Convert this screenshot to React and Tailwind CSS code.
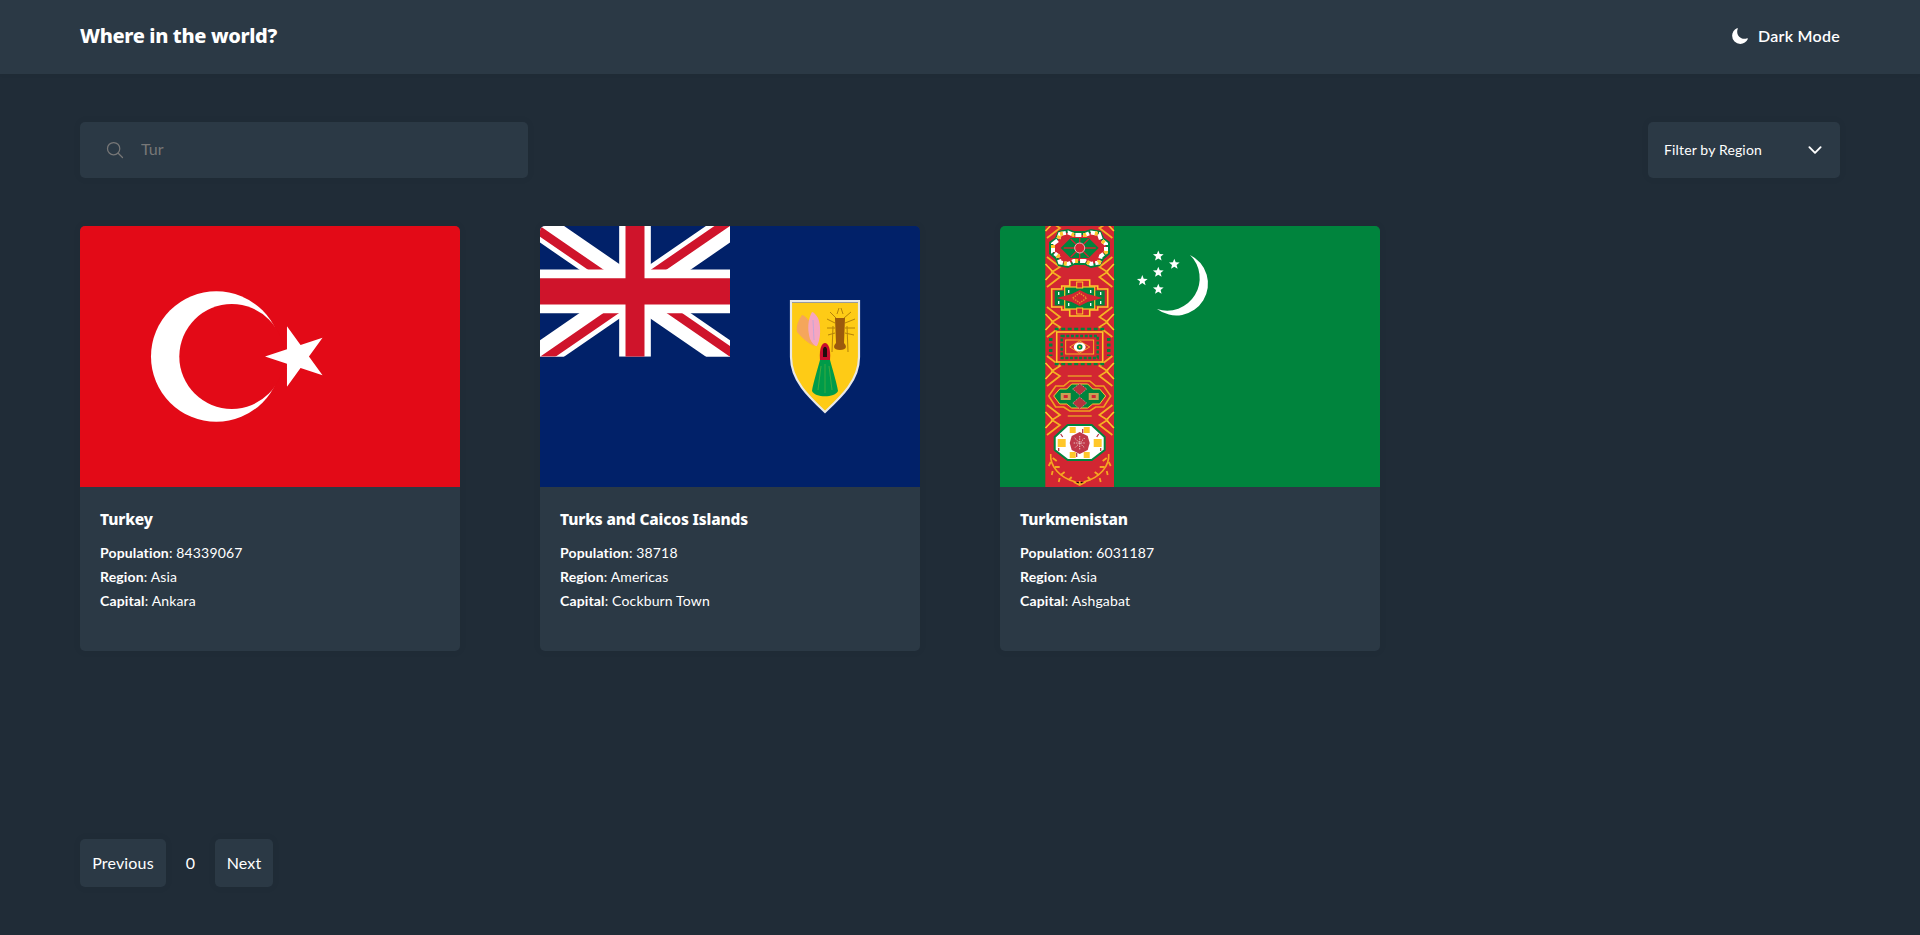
import React from "react";
import { IoMoon, IoSearchOutline, IoChevronDown } from "react-icons/io5";

const starPts = (cx, cy, R, rot = -90, r = R * 0.382) => {
  const p = [];
  for (let i = 0; i < 10; i++) {
    const a = ((rot + i * 36) * Math.PI) / 180;
    const d = i % 2 ? r : R;
    p.push(`${(cx + d * Math.cos(a)).toFixed(2)},${(cy + d * Math.sin(a)).toFixed(2)}`);
  }
  return p.join(" ");
};

function Soft({ id }) {
  return (
    <filter id={id} x="-5%" y="-5%" width="110%" height="110%">
      <feGaussianBlur stdDeviation="0.45" />
    </filter>
  );
}

function TurkeyFlag() {
  return (
    <svg viewBox="0 0 380 261" className="block w-full h-full">
      <rect width="380" height="261" fill="#e30a17" />
      <circle cx="136.3" cy="130.5" r="65.3" fill="#fff" />
      <circle cx="151.8" cy="130.5" r="52.5" fill="#e30a17" />
      <polygon points={starPts(216.8, 130.5, 31.8, 180)} fill="#fff" />
    </svg>
  );
}

function TurksFlag() {
  return (
    <svg viewBox="0 0 380 261" className="block w-full h-full">
      <defs><Soft id="softtc" /></defs>
      <rect width="380" height="261" fill="#012169" />
      <svg x="0" y="0" width="190" height="130.7" viewBox="0 0 60 30" preserveAspectRatio="none">
        <clipPath id="ujclip">
          <path d="M30,15 h30 v15 z v15 h-30 z h-30 v-15 z v-15 h30 z" />
        </clipPath>
        <path d="M0,0 L60,30 M60,0 L0,30" stroke="#fff" strokeWidth="6.8" />
        <path d="M0,0 L60,30 M60,0 L0,30" clipPath="url(#ujclip)" stroke="#cf142b" strokeWidth="4.4" />
        <path d="M30,0 v30 M0,15 h60" stroke="#fff" strokeWidth="10" />
        <path d="M30,0 v30 M0,15 h60" stroke="#cf142b" strokeWidth="6" />
      </svg>
      <g filter="url(#softtc)">
        <path d="M251,75 H319 V131 C319,155 300,172 285,186 C270,172 251,155 251,131 Z" fill="#fecb12" stroke="#e8e8e8" strokeWidth="2.2" />
        <path d="M252,76.5 H318" stroke="#9a9a9a" strokeWidth="1.2" />
        {/* conch */}
        <path d="M262,89 C258,95 256,100 257,106 C262,112 268,117 274,120 L272,98 C268,94 266,90 262,89 Z" fill="#f5a65b" />
        <path d="M272,86 C268,93 267,103 270,113 C272,117 275,121 277,120 C281,113 281,98 278,92 C276,89 274,86 272,86 Z" fill="#f6a6c1" />
        <path d="M273,94 L274,114" stroke="#b9a6dc" strokeWidth="0.8" />
        {/* lobster */}
        <g stroke="#b5820f" strokeWidth="1" fill="none">
          <path d="M296,92 L290,86 M304,92 L311,86 M297,88 L299,82 M303,88 L301,82 M295,97 L287,93 M305,97 L315,93 M295,102 L287,102 M305,102 L315,102 M295,107 L288,109 M305,107 L314,109 M293,100 L292,126 M307,100 L308,126" />
        </g>
        <path d="M295,92 H305 L304,117 C307,120 307,124 300,124 C293,124 293,120 296,117 Z" fill="#9c5a10" />
        {/* hood + green */}
        <path d="M280,134 C279,122 282,117 285,117 C288,117 291,122 290,134 Z" fill="#c8102e" />
        <path d="M283,131 V123 C284,120 286,120 287,123 V131 Z" fill="#200a10" />
        <path d="M280,134 H290 C293,145 297,158 298,165 C295,172 275,172 272,165 C273,158 277,145 280,134 Z" fill="#009b48" />
        <path d="M281,140 L278,164 M285,138 V167 M289,140 L292,164" stroke="#7dbb3a" strokeWidth="0.5" />
      </g>
    </svg>
  );
}

const G = "#00843d";
const R = "#d22630";
const Y = "#ffc72c";
const W = "#ffffff";

function Knot({ y, side }) {
  const t = side < 0 ? "" : `translate(159.4 0) scale(-1 1)`;
  return (
    <g transform={t}>
      <path d={`M45.5,${y - 8} L53,${y} L45.5,${y + 8}`} fill="none" stroke={Y} strokeWidth="1.6" />
      <path d={`M47,${y - 15} L60,${y - 5} L52,${y} L60,${y + 5} L47,${y + 15}`} fill="none" stroke="#f5b324" strokeWidth="1.7" />
    </g>
  );
}

function Carpet() {
  const cx = 79.7;
  return (
    <g filter="url(#softtm)">
      <rect x="45.3" y="-2" width="68.7" height="265" fill={R} />
      <Knot y={-3} side={-1} />
      <Knot y={-3} side={1} />
      {[46, 96, 145, 194].map((y) => (
        <React.Fragment key={y}>
          <Knot y={y} side={-1} />
          <Knot y={y} side={1} />
        </React.Fragment>
      ))}
      {/* gul 1 */}
      <path d="M58,5 L68,3 L74,5 L85,5 L91,3 L101,5 L104,12 L110,16 L110,28 L104,33 L100,40 L91,42 L85,39 L74,39 L68,42 L58,40 L55,33 L49,28 L49,16 L55,12 Z" fill={G} />
      <path d="M60,8 L68,6.5 L74,9 L85,9 L91,6.5 L99,8 L101,14 L106,18 L106,26 L101,30 L99,36.5 L91,38 L85,35 L74,35 L68,38 L60,36.5 L58,30 L53,26 L53,18 L58,14 Z" fill={R} stroke={W} strokeWidth="4" strokeDasharray="6 2" />
      <path d="M60,8 L68,6.5 L74,9 L85,9 L91,6.5 L99,8 L101,14 L106,18 L106,26 L101,30 L99,36.5 L91,38 L85,35 L74,35 L68,38 L60,36.5 L58,30 L53,26 L53,18 L58,14 Z" fill="none" stroke={Y} strokeWidth="4" strokeDasharray="3 9" />
      <path d={`M${cx - 19},22 L${cx - 9},12 L${cx + 9},12 L${cx + 19},22 L${cx + 9},32 L${cx - 9},32 Z`} fill={G} />
      <path d={`M${cx - 16},22 H${cx + 16} M${cx},11 V33 M${cx - 9},13 L${cx + 9},31 M${cx + 9},13 L${cx - 9},31`} stroke={R} strokeWidth="1.3" />
      <circle cx={cx} cy="22" r="5" fill={R} stroke="#e9b8bc" strokeWidth="1" />
      {/* gul 2 */}
      <path d={`M${cx - 28},63 H${cx - 18} V60 H${cx - 10} V54 H${cx + 10} V60 H${cx + 18} V63 H${cx + 28} V81 H${cx + 18} V84 H${cx + 10} V90 H${cx - 10} V84 H${cx - 18} V81 H${cx - 28} Z`} fill={R} stroke={Y} strokeWidth="1.6" />
      <rect x={cx - 25} y="64.5" width="50" height="15" fill={G} />
      <rect x={cx - 15} y="61" width="30" height="22" fill={G} stroke={Y} strokeWidth="1.2" />
      <path d={`M${cx - 23},72 L${cx - 8},68 L${cx},64 L${cx + 8},68 L${cx + 23},72 L${cx + 8},76 L${cx},80 L${cx - 8},76 Z`} fill={R} />
      <path d={`M${cx - 7},72 L${cx},67 L${cx + 7},72 L${cx},77 Z`} fill="none" stroke="#e8962a" strokeWidth="1.3" strokeDasharray="1.5 1" />
      <rect x={cx - 3} y="56" width="6" height="6" fill={R} stroke={Y} strokeWidth="1" />
      <rect x={cx - 3} y="82" width="6" height="6" fill={R} stroke={Y} strokeWidth="1" />
      <path d={`M${cx - 21},66 v3 M${cx + 21},66 v3 M${cx - 21},75 v3 M${cx + 21},75 v3 M${cx - 11},64 v3 M${cx + 11},64 v3 M${cx - 11},77 v3 M${cx + 11},77 v3`} stroke={W} strokeWidth="1.3" />
      {/* gul 3 */}
      <path d={`M${cx - 25},103 H${cx + 25} M${cx - 25},138 H${cx + 25}`} stroke={G} strokeWidth="2.4" strokeDasharray="4 2.5" />
      <path d={`M${cx - 29},112 V130 M${cx + 29},112 V130`} stroke={G} strokeWidth="3.5" strokeDasharray="3 2.5" />
      <rect x={cx - 23} y="106" width="46" height="30" fill={R} stroke={Y} strokeWidth="1.6" />
      <rect x={cx - 18} y="110" width="36" height="22" fill="none" stroke={G} strokeWidth="2.4" strokeDasharray="3 1.6" />
      <rect x={cx - 14} y="114" width="28" height="14" fill={R} stroke={Y} strokeWidth="0.9" />
      <path d={`M${cx - 10},121 L${cx},115 L${cx + 10},121 L${cx},127 Z`} fill={R} stroke={Y} strokeWidth="0.8" />
      <ellipse cx={cx} cy="121" rx="6" ry="4.5" fill={W} />
      <circle cx={cx} cy="121" r="2.8" fill={G} />
      <circle cx={cx} cy="121" r="1.1" fill={Y} />
      {/* gul 4 */}
      <path d={`M${cx - 31},170 L${cx - 24},160 H${cx - 16} L${cx - 10},155 H${cx + 10} L${cx + 16},160 H${cx + 24} L${cx + 31},170 L${cx + 24},181 H${cx + 16} L${cx + 10},185 H${cx - 10} L${cx - 16},181 H${cx - 24} Z`} fill={R} stroke="#f0a020" strokeWidth="1.6" />
      <path d={`M${cx - 26},170 L${cx - 20},163 H${cx - 13} L${cx - 8},158 H${cx + 8} L${cx + 13},163 H${cx + 20} L${cx + 26},170 L${cx + 20},178 H${cx + 13} L${cx + 8},182 H${cx - 8} L${cx - 13},178 H${cx - 20} Z`} fill={G} stroke={Y} strokeWidth="1" />
      <path d={`M${cx - 7},163 L${cx},157.5 L${cx + 7},163 L${cx},169 Z M${cx - 7},177 L${cx},171 L${cx + 7},177 L${cx},183 Z`} fill="#b5303e" stroke="#e9c6c8" strokeWidth="0.6" strokeDasharray="1.2 1" />
      <rect x={cx - 19} y="167" width="10" height="7" fill="#c9a052" />
      <rect x={cx + 9} y="167" width="10" height="7" fill="#c9a052" />
      <rect x={cx - 16} y="169" width="4" height="3" fill={R} />
      <rect x={cx + 12} y="169" width="4" height="3" fill={R} />
      <path d={`M${cx - 12},150 H${cx + 12} M${cx - 12},190 H${cx + 12}`} stroke="#e8962a" strokeWidth="1.3" />
      {/* gul 5 */}
      <path d={`M${cx - 12},199 H${cx + 12} L${cx + 25},211 V224 L${cx + 12},234 H${cx - 12} L${cx - 25},224 V211 Z`} fill={W} stroke={G} strokeWidth="2" />
      <path d={`M${cx - 22},213 h8 v8 h-8 Z M${cx + 14},213 h8 v8 h-8 Z M${cx - 10},201 h6 v6 h-6 Z M${cx + 4},201 h6 v6 h-6 Z M${cx - 10},226 h6 v6 h-6 Z M${cx + 4},226 h6 v6 h-6 Z`} fill={Y} />
      <path d={`M${cx - 21},222 v3 M${cx + 21},222 v3 M${cx - 19},208 l2,3 M${cx + 19},208 l-2,3 M${cx - 3},227 v4 M${cx + 3},203 v4`} stroke="#b5303e" strokeWidth="1.2" />
      <path d={`M${cx - 8},210 L${cx},206 L${cx + 8},210 L${cx + 10},217 L${cx + 8},224 L${cx},228 L${cx - 8},224 L${cx - 10},217 Z`} fill="#c0394a" />
      <path d={`M${cx - 6},217 H${cx + 6} M${cx},210 V224 M${cx - 5},212 L${cx + 5},222 M${cx + 5},212 L${cx - 5},222`} stroke="#e7c2c4" strokeWidth="1" strokeDasharray="1.4 1" />
      {/* wreath */}
      <path d={`M${cx - 29},228 C${cx - 30},240 ${cx - 20},252 ${cx - 4},256 M${cx + 29},228 C${cx + 30},240 ${cx + 20},252 ${cx + 4},256`} fill="none" stroke="#f5a623" strokeWidth="1.6" />
      <path d={`M${cx - 27},232 l4,3 M${cx - 29},236 l-2,4 M${cx - 25},241 l5,0 M${cx - 27},245 l-1,4 M${cx - 19},249 l4,-3 M${cx - 20},252 l-1,4 M${cx - 11},254 l3,-3 M${cx + 27},232 l-4,3 M${cx + 29},236 l2,4 M${cx + 25},241 l-5,0 M${cx + 27},245 l1,4 M${cx + 19},249 l-4,-3 M${cx + 20},252 l1,4 M${cx + 11},254 l-3,-3 M${cx - 6},256 L${cx},259 L${cx + 6},256 M${cx},255 v5`} stroke="#f5a623" strokeWidth="1.8" />
    </g>
  );
}

function TurkmenFlag() {
  return (
    <svg viewBox="0 0 380 261" className="block w-full h-full">
      <defs>
        <clipPath id="tmclip"><rect width="380" height="261" /></clipPath>
        <Soft id="softtm" />
      </defs>
      <rect width="380" height="261" fill={G} />
      <g clipPath="url(#tmclip)"><Carpet /></g>
      <path d="M190,29 A31.8,31.8 0 1 1 157,83 A32.5,32.5 0 0 0 190,29 Z" fill="#fff" />
      {[[158.3, 30], [174.3, 38.3], [158.3, 46.3], [142.3, 54.7], [158.3, 63.3]].map(([x, y]) => (
        <polygon key={`${x}${y}`} points={starPts(x, y, 5.6, -90, 2.4)} fill="#fff" />
      ))}
    </svg>
  );
}

function Card({ flag, name, population, region, capital }) {
  return (
    <div className="h-[425px] rounded-[5px] overflow-hidden bg-[#2b3945] shadow-[0_0_7px_2px_rgba(0,0,0,0.03)]">
      <div className="h-[261px]">{flag}</div>
      <div className="px-5 pt-[20px]">
        <h2 className="text-[15.5px] leading-[24px] font-[800] mb-[10px] font-['Noto_Sans',sans-serif] tracking-[-0.15px]">{name}</h2>
        <p className="text-[14px] leading-[24px] tracking-[0.15px]"><span className="font-bold">Population</span>: {population}</p>
        <p className="text-[14px] leading-[24px] tracking-[0.15px]"><span className="font-bold">Region</span>: {region}</p>
        <p className="text-[14px] leading-[24px] tracking-[0.15px]"><span className="font-bold">Capital</span>: {capital}</p>
      </div>
    </div>
  );
}

export default function App() {
  return (
    <div className="min-h-[935px] bg-[#202c37] text-white font-['Lato','Noto_Sans',sans-serif]">
      <header className="h-[74px] bg-[#2b3945] pl-20 pr-20 pb-[3px] flex items-center justify-between shadow-[0_1px_4px_rgba(0,0,0,0.04)]">
        <h1 className="text-[20px] font-[800] leading-[28px] font-['Noto_Sans',sans-serif] tracking-[-0.35px]">Where in the world?</h1>
        <div className="flex items-center gap-[9px] text-[16px] font-semibold">
          <IoMoon className="w-[18px] h-[18px]" />
          <span className="tracking-[0.25px]">Dark Mode</span>
        </div>
      </header>
      <main className="px-20">
        <div className="pt-[48px] flex justify-between">
          <div className="w-[448px] h-[56px] rounded-[5px] bg-[#2b3945] flex items-center pl-[25px] shadow-[0_0_7px_2px_rgba(0,0,0,0.03)]">
            <IoSearchOutline className="w-[20px] h-[20px] text-[#777777]" />
            <input defaultValue="Tur" className="ml-[16px] flex-1 bg-transparent outline-none text-[16px] text-[#777777] pb-[2px]" />
          </div>
          <div className="w-[192px] h-[56px] rounded-[5px] bg-[#2b3945] flex items-center justify-between pl-4 pr-[15px] shadow-[0_0_7px_2px_rgba(0,0,0,0.03)]">
            <span className="text-[14px] tracking-[0.15px] pb-[2px]">Filter by Region</span>
            <IoChevronDown className="w-[20px] h-[20px]" />
          </div>
        </div>
        <div className="mt-[48px] grid grid-cols-4 gap-20">
          <Card flag={<TurkeyFlag />} name="Turkey" population="84339067" region="Asia" capital="Ankara" />
          <Card flag={<TurksFlag />} name="Turks and Caicos Islands" population="38718" region="Americas" capital="Cockburn Town" />
          <Card flag={<TurkmenFlag />} name="Turkmenistan" population="6031187" region="Asia" capital="Ashgabat" />
        </div>
        <div className="mt-[188px] flex items-center text-[16px] tracking-[0.15px]">
          <button className="h-[48px] w-[86px] rounded-[5px] bg-[#2b3945] shadow-[0_0_7px_2px_rgba(0,0,0,0.03)]">Previous</button>
          <span className="w-[49px] text-center">0</span>
          <button className="h-[48px] w-[58px] rounded-[5px] bg-[#2b3945] shadow-[0_0_7px_2px_rgba(0,0,0,0.03)]">Next</button>
        </div>
      </main>
    </div>
  );
}
